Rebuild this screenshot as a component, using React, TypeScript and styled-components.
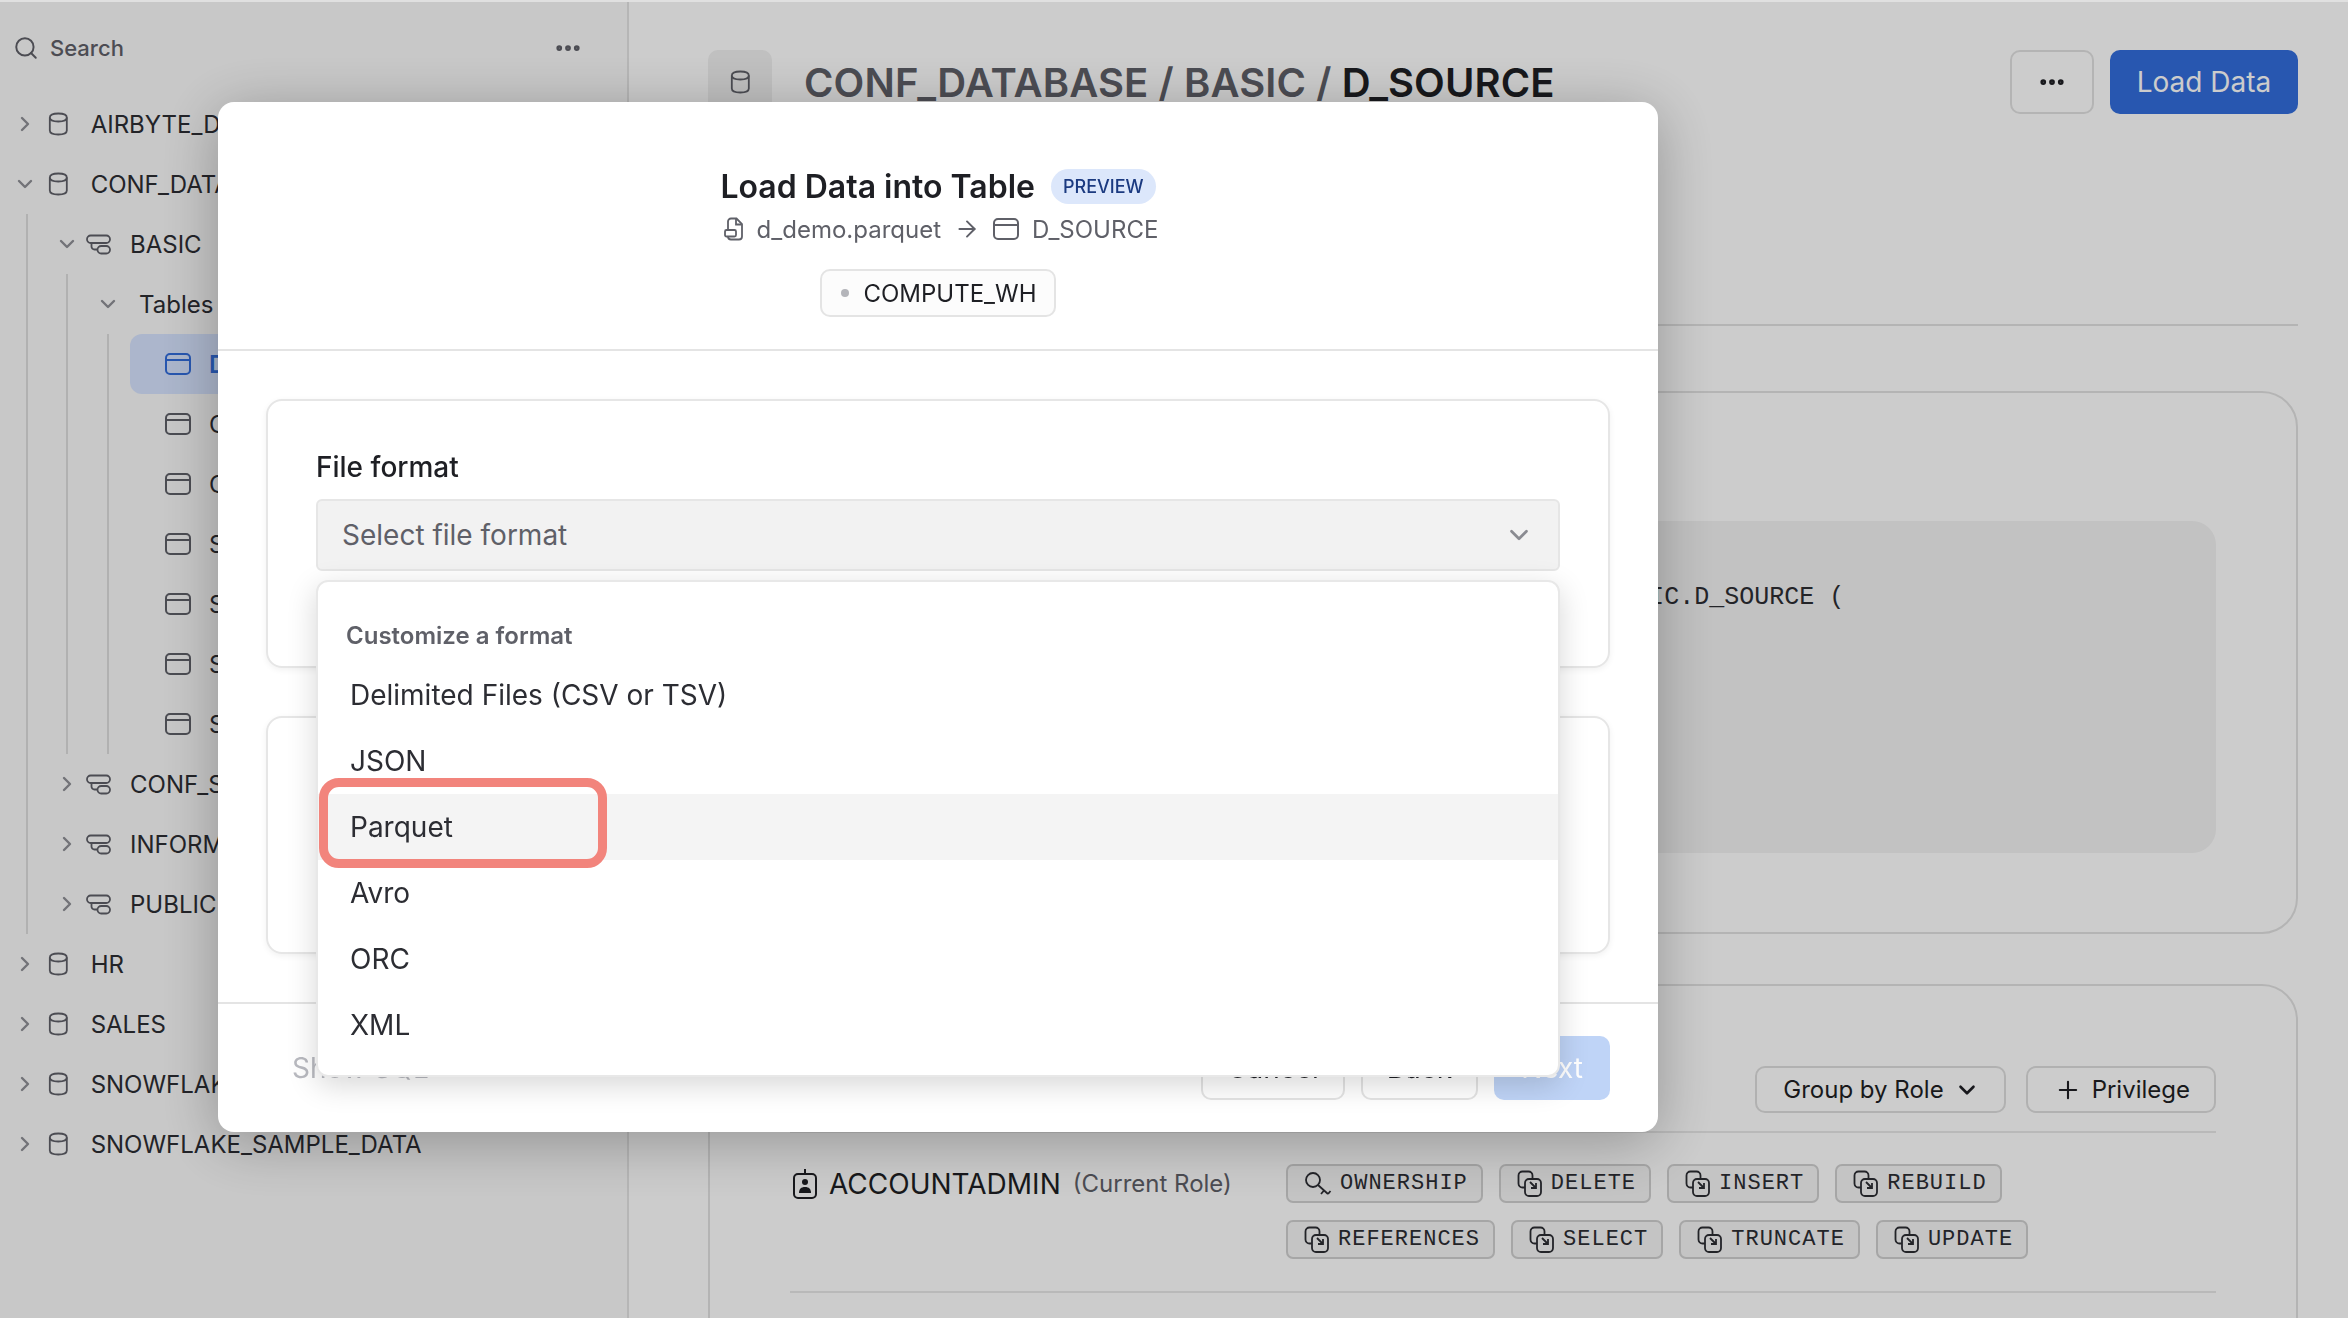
import React from 'react';
import styled, { createGlobalStyle } from 'styled-components';
import { ArrowRight, ChevronDown, ChevronRight, MoreHorizontal, Plus, Search } from 'lucide-react';

const GlobalStyle = createGlobalStyle`
  html, body {
    margin: 0;
    padding: 0;
    background: #fff;
    font-family: 'Inter', 'Liberation Sans', sans-serif;
    color: #1e1f24;
    overflow: hidden;
  }
  * { box-sizing: border-box; }
`;

const Page = styled.div`
  display: flex;
  width: 2348px;
  height: 1318px;
  overflow: hidden;
`;

const Sidebar = styled.aside`
  flex: 0 0 629px;
  background: #fafafa;
  border-right: 2px solid #e4e4e4;
  padding-top: 24px;
`;

const SearchRow = styled.div`
  display: flex;
  align-items: center;
  height: 48px;
  padding: 0 44px 0 13px;
  margin-bottom: 22px;
  color: #5f6068;
  font-size: 22px;
  font-weight: 500;
  gap: 11px;
`;

const SearchLabel = styled.span`
  flex: 1;
`;

const TreeGroup = styled.div<{ $left: number }>`
  margin-left: ${(p) => p.$left}px;
  border-left: 2px solid #dedede;
`;

const TreeRow = styled.div<{ $pad: number; $selected?: boolean }>`
  display: flex;
  align-items: center;
  height: 60px;
  padding-left: ${(p) => p.$pad}px;
  font-size: 24px;
  color: ${(p) => (p.$selected ? '#326ddc' : '#2c2d33')};
  font-weight: ${(p) => (p.$selected ? 600 : 400)};
  white-space: nowrap;
  background: ${(p) => (p.$selected ? '#d7e4ff' : 'transparent')};
  border-radius: ${(p) => (p.$selected ? '12px' : '0')};
`;

const Caret = styled.span<{ $after: number }>`
  display: flex;
  width: 24px;
  justify-content: center;
  margin-right: ${(p) => p.$after}px;
  color: #8f9096;
  flex: none;
`;

const TreeIcon = styled.span<{ $gap: number }>`
  display: flex;
  flex: none;
  margin: 0 ${(p) => p.$gap}px 0 0;
  color: #5f6068;
`;

const SelectedTable = styled.div`
  margin-left: 21px;
`;

const Main = styled.main`
  flex: 1;
  min-width: 0;
  background: #fff;
  padding: 50px 50px 0 79px;
`;

const Header = styled.header`
  display: flex;
  align-items: center;
  height: 64px;
`;

const TitleIcon = styled.div`
  display: flex;
  align-items: center;
  justify-content: center;
  width: 64px;
  height: 64px;
  border-radius: 10px;
  background: #f0f0f0;
  color: #5f6068;
  margin-right: 32px;
`;

const Title = styled.h1`
  flex: 1;
  margin: 0;
  font-size: 40px;
  font-weight: 600;
  color: #5f6068;
  letter-spacing: 0.1px;
`;

const TitleStrong = styled.span`
  color: #1e1f24;
`;

const IconButton = styled.button`
  display: flex;
  align-items: center;
  justify-content: center;
  width: 84px;
  height: 64px;
  border: 2px solid #e2e2e2;
  border-radius: 10px;
  background: #fff;
  color: #1e1f24;
  margin-right: 16px;
`;

const PrimaryButton = styled.button`
  width: 188px;
  height: 64px;
  border: none;
  border-radius: 10px;
  background: #326ddc;
  color: #fff;
  font-family: inherit;
  font-size: 28px;
`;

const Rule = styled.div`
  height: 2px;
  background: #e2e2e2;
  margin-top: 210px;
`;

const Card = styled.section`
  border: 2px solid #e2e2e2;
  border-radius: 36px;
`;

const DefinitionCard = styled(Card)`
  height: 543px;
  margin-top: 65px;
  padding: 128px 80px 0;
`;

const CodeBlock = styled.pre`
  height: 332px;
  margin: 0;
  padding: 62px 0 0 94px;
  border-radius: 24px;
  background: #f3f3f3;
  font-family: 'Liberation Mono', monospace;
  font-size: 25px;
  color: #2c2d33;
`;

const PrivilegesCard = styled(Card)`
  height: 500px;
  margin-top: 50px;
  padding: 80px 80px 0;
`;

const PrivilegeActions = styled.div`
  display: flex;
  justify-content: flex-end;
  gap: 20px;
  padding-bottom: 18px;
  border-bottom: 2px solid #e8e8e8;
`;

const OutlineButton = styled.button`
  display: flex;
  align-items: center;
  gap: 10px;
  height: 47px;
  padding: 0 24px 0 26px;
  border: 2px solid #dedede;
  border-radius: 10px;
  background: #fff;
  color: #1e1f24;
  font-family: inherit;
  font-size: 24px;
`;

const RoleRow = styled.div`
  display: flex;
  padding: 31px 0 32px 3px;
  border-bottom: 2px solid #e8e8e8;
`;

const RoleName = styled.div`
  display: flex;
  flex: 0 0 493px;
  align-items: center;
  height: 39px;
  gap: 12px;
  font-size: 28px;
`;

const RoleNote = styled.span`
  font-size: 24px;
  color: #5f6068;
`;

const ChipList = styled.div`
  display: flex;
  flex-wrap: wrap;
  gap: 17px 16px;
`;

const Chip = styled.span`
  display: flex;
  align-items: center;
  gap: 8px;
  height: 39px;
  padding: 0 13px 0 16px;
  border: 2px solid #d0d0d0;
  border-radius: 7px;
  background: #f5f5f5;
  font-family: 'Liberation Mono', monospace;
  font-size: 22px;
  letter-spacing: 1px;
  color: #2c2d33;
`;

const Backdrop = styled.div`
  position: fixed;
  inset: 2px 0 0 0;
  background: rgba(0, 0, 0, 0.2);
`;

const TopEdge = styled.div`
  position: fixed;
  inset: 0 0 auto 0;
  height: 2px;
  background: #e0e0e0;
`;

const Modal = styled.div`
  position: fixed;
  left: 218px;
  top: 102px;
  display: flex;
  flex-direction: column;
  width: 1440px;
  height: 1030px;
  border-radius: 16px;
  background: #fff;
  box-shadow: 0 10px 60px rgba(0, 0, 0, 0.28);
`;

const ModalHeader = styled.div`
  display: flex;
  flex-direction: column;
  align-items: center;
  height: 249px;
  padding-top: 62px;
  border-bottom: 2px solid #e4e4e4;
`;

const ModalTitleRow = styled.div`
  display: flex;
  align-items: center;
  gap: 16px;
  height: 44px;
`;

const ModalTitle = styled.h2`
  margin: 0;
  font-size: 32px;
  font-weight: 600;
  color: #1e1f24;
`;

const PreviewPill = styled.span`
  display: flex;
  align-items: center;
  height: 35px;
  padding: 0 12px;
  border-radius: 18px;
  background: #dce7fb;
  color: #1b3a80;
  font-size: 18px;
  font-weight: 500;
`;

const ModalSub = styled.div`
  display: flex;
  align-items: center;
  gap: 13px;
  height: 40px;
  margin: 1px 0 0 6px;
  font-size: 24px;
  color: #5f6068;
`;

const WarehousePill = styled.div`
  display: flex;
  align-items: center;
  gap: 14px;
  height: 48px;
  margin-top: 20px;
  padding: 0 17px 0 19px;
  border: 2px solid #e4e4e4;
  border-radius: 10px;
  background: #fcfcfc;
  font-size: 24px;
  color: #1e1f24;
`;

const StatusDot = styled.span`
  width: 8px;
  height: 8px;
  border-radius: 50%;
  background: #b4b5ba;
`;

const ModalBody = styled.div`
  flex: 1;
  display: flex;
  flex-direction: column;
  gap: 48px;
  padding: 48px 48px 0 48px;
  border-bottom: 2px solid #e4e4e4;
`;

const FormCard = styled.div<{ $height: number }>`
  height: ${(p) => p.$height}px;
  padding: 47px 48px 0;
  border: 2px solid #e6e6e6;
  border-radius: 16px;
  box-shadow: 0 2px 6px rgba(0, 0, 0, 0.06);
`;

const FieldLabel = styled.label`
  display: block;
  height: 38px;
  margin-bottom: 13px;
  font-size: 28px;
  font-weight: 500;
  line-height: 38px;
  color: #1e1f24;
`;

const SelectWrap = styled.div`
  position: relative;
`;

const SelectBox = styled.div`
  display: flex;
  align-items: center;
  justify-content: space-between;
  height: 72px;
  padding: 0 24px;
  border: 2px solid #e6e6e6;
  border-radius: 6px;
  background: #f2f2f2;
  color: #5f6068;
  font-size: 28px;
`;

const Dropdown = styled.div`
  position: absolute;
  z-index: 2;
  top: 81px;
  left: 0;
  width: 100%;
  height: 497px;
  padding: 34px 0 0;
  border: 2px solid #e8e8e8;
  border-radius: 12px;
  background: #fff;
  box-shadow: 0 8px 30px rgba(0, 0, 0, 0.16);
`;

const DropdownLabel = styled.div`
  height: 40px;
  padding-left: 28px;
  margin-bottom: 6px;
  font-size: 24px;
  font-weight: 600;
  line-height: 40px;
  color: #5f6068;
`;

const DropdownItem = styled.div<{ $active?: boolean }>`
  display: flex;
  align-items: center;
  height: 66px;
  padding-left: 32px;
  font-size: 28px;
  color: #2c2d33;
  background: ${(p) => (p.$active ? '#f4f4f4' : 'transparent')};
`;

const Highlight = styled.div`
  position: absolute;
  z-index: 3;
  left: 1px;
  top: 196px;
  width: 288px;
  height: 90px;
  border: 9px solid #f2847c;
  border-radius: 20px;
`;

const ModalFooter = styled.div`
  display: flex;
  align-items: center;
  gap: 16px;
  height: 128px;
  padding: 0 48px 0 74px;
`;

const ShowSql = styled.span`
  flex: 1;
  font-size: 28px;
  color: #b9bac0;
`;

const FooterButton = styled.button`
  height: 64px;
  padding: 0 24px;
  border: 2px solid #e4e4e4;
  border-radius: 10px;
  background: #fff;
  color: #1e1f24;
  font-family: inherit;
  font-size: 28px;
`;

const NextButton = styled(FooterButton)`
  padding: 0 27px;
  border: none;
  background: #bfd4f7;
  color: #fff;
`;

const DbIcon = ({ size = 24 }: { size?: number }) => (
  <svg width={size * 0.86} height={size} viewBox="0 0 20 24" fill="none" stroke="currentColor" strokeWidth="1.8">
    <path d="M1.500 5.500C1.500 3 4 1.500 10 1.500s8.500 1.500 8.500 4v13c0 2.500-2.500 4-8.500 4s-8.500-1.500-8.500-4z" />
    <path d="M1.500 5.500c0 2.500 2.500 4 8.500 4s8.500-1.500 8.500-4" />
  </svg>
);

const SchemaIcon = () => (
  <svg width="25" height="21" viewBox="0 0 25 21" fill="none" stroke="currentColor" strokeWidth="1.8">
    <rect x="1" y="1.500" width="23" height="7.500" rx="3.700" />
    <path d="M5.500 9v3.500a3 3 0 0 0 3 3h3" />
    <rect x="11.500" y="12" width="12.500" height="7.500" rx="3.700" />
  </svg>
);

const TableIcon = ({ color }: { color?: string }) => (
  <svg width="26" height="22" viewBox="0 0 26 22" fill="none" stroke={color ?? 'currentColor'} strokeWidth="2">
    <rect x="1" y="1" width="24" height="20" rx="4" />
    <path d="M1 7h24" />
  </svg>
);

const FileIcon = () => (
  <svg width="20" height="24" viewBox="0 0 20 24" fill="none" stroke="currentColor" strokeWidth="1.8">
    <path d="M4 13V4.500a3 3 0 0 1 3-3h5.500l5.500 5.500v12.500a3 3 0 0 1-3 3H7a3 3 0 0 1-3-3" />
    <path d="M12 2v5.500h5.500" />
    <rect x="1" y="13" width="11" height="6.500" rx="1.500" />
  </svg>
);

const KeyIcon = () => (
  <svg width="28" height="26" viewBox="0 0 28 26" fill="none" stroke="currentColor" strokeWidth="1.8">
    <circle cx="9" cy="9" r="7" />
    <path d="M14 14l10 9M20 19.500l-3 3.500M24 23l2.500-3" />
  </svg>
);

const GrantIcon = () => (
  <svg width="26" height="28" viewBox="0 0 26 28" fill="none" stroke="currentColor" strokeWidth="1.8">
    <rect x="1.500" y="1.500" width="14" height="16" rx="4" />
    <rect x="8" y="9" width="16" height="17" rx="4" fill="#f5f5f5" />
    <path d="M13 12l6 6M19 13v5h-5" />
  </svg>
);

const RoleIcon = () => (
  <svg width="24" height="30" viewBox="0 0 24 30" fill="none" stroke="currentColor" strokeWidth="2">
    <rect x="1" y="5" width="22" height="24" rx="4" />
    <path d="M12 0v5" />
    <circle cx="12" cy="13" r="3" fill="currentColor" stroke="none" />
    <path d="M6 24c0-4 2-6 6-6s6 2 6 6z" fill="currentColor" stroke="none" />
  </svg>
);

const Right = () => <ChevronRight size={24} strokeWidth={2.4} />;
const Down = () => <ChevronDown size={26} strokeWidth={2.4} />;

const tableRows = ['CUSTOMERS', 'ORDERS', 'SALES', 'STORES', 'SUPPLIERS', 'SHIPMENTS'];
const dbBelow = ['HR', 'SALES', 'SNOWFLAKE', 'SNOWFLAKE_SAMPLE_DATA'];
const schemasBelow = ['CONF_STAGING', 'INFORMATION_SCHEMA', 'PUBLIC'];
const formats = ['Delimited Files (CSV or TSV)', 'JSON', 'Parquet', 'Avro', 'ORC', 'XML'];
const chips = ['OWNERSHIP', 'DELETE', 'INSERT', 'REBUILD', 'REFERENCES', 'SELECT', 'TRUNCATE', 'UPDATE'];

const App: React.FC = () => (
  <>
    <GlobalStyle />
    <Page>
      <Sidebar>
        <SearchRow>
          <Search size={26} strokeWidth={1.8} />
          <SearchLabel>Search</SearchLabel>
          <MoreHorizontal size={30} strokeWidth={2.6} />
        </SearchRow>
        <TreeRow $pad={13}>
          <Caret $after={11}><Right /></Caret>
          <TreeIcon $gap={22}><DbIcon /></TreeIcon>
          AIRBYTE_DATABASE
        </TreeRow>
        <TreeRow $pad={13}>
          <Caret $after={11}><Down /></Caret>
          <TreeIcon $gap={22}><DbIcon /></TreeIcon>
          CONF_DATABASE
        </TreeRow>
        <TreeGroup $left={26}>
          <TreeRow $pad={27}>
            <Caret $after={7}><Down /></Caret>
            <TreeIcon $gap={19}><SchemaIcon /></TreeIcon>
            BASIC
          </TreeRow>
          <TreeGroup $left={38}>
            <TreeRow $pad={28}>
              <Caret $after={19}><Down /></Caret>
              Tables
            </TreeRow>
            <TreeGroup $left={39}>
              <SelectedTable>
                <TreeRow $pad={35} $selected>
                  <TreeIcon $gap={18}><TableIcon color="#326ddc" /></TreeIcon>
                  D_SOURCE
                </TreeRow>
                {tableRows.map((name) => (
                  <TreeRow key={name} $pad={35}>
                    <TreeIcon $gap={18}><TableIcon /></TreeIcon>
                    {name}
                  </TreeRow>
                ))}
              </SelectedTable>
            </TreeGroup>
          </TreeGroup>
          {schemasBelow.map((name) => (
            <TreeRow key={name} $pad={27}>
              <Caret $after={7}><Right /></Caret>
              <TreeIcon $gap={19}><SchemaIcon /></TreeIcon>
              {name}
            </TreeRow>
          ))}
        </TreeGroup>
        {dbBelow.map((name) => (
          <TreeRow key={name} $pad={13}>
            <Caret $after={11}><Right /></Caret>
            <TreeIcon $gap={22}><DbIcon /></TreeIcon>
            {name}
          </TreeRow>
        ))}
      </Sidebar>

      <Main>
        <Header>
          <TitleIcon><DbIcon /></TitleIcon>
          <Title>
            CONF_DATABASE / BASIC / <TitleStrong>D_SOURCE</TitleStrong>
          </Title>
          <IconButton><MoreHorizontal size={30} strokeWidth={2.6} /></IconButton>
          <PrimaryButton>Load Data</PrimaryButton>
        </Header>
        <Rule />
        <DefinitionCard>
          <CodeBlock>create or replace TRANSIENT TABLE CONF_DATABASE.BASIC.D_SOURCE (</CodeBlock>
        </DefinitionCard>
        <PrivilegesCard>
          <PrivilegeActions>
            <OutlineButton>Group by Role <ChevronDown size={26} strokeWidth={2.4} /></OutlineButton>
            <OutlineButton><Plus size={28} strokeWidth={1.8} /> Privilege</OutlineButton>
          </PrivilegeActions>
          <RoleRow>
            <RoleName>
              <RoleIcon />
              ACCOUNTADMIN <RoleNote>(Current Role)</RoleNote>
            </RoleName>
            <ChipList>
              {chips.map((chip) => (
                <Chip key={chip}>
                  {chip === 'OWNERSHIP' ? <KeyIcon /> : <GrantIcon />}
                  {chip}
                </Chip>
              ))}
            </ChipList>
          </RoleRow>
        </PrivilegesCard>
      </Main>
    </Page>

    <TopEdge />
    <Backdrop />
    <Modal>
      <ModalHeader>
        <ModalTitleRow>
          <ModalTitle>Load Data into Table</ModalTitle>
          <PreviewPill>PREVIEW</PreviewPill>
        </ModalTitleRow>
        <ModalSub>
          <FileIcon />
          d_demo.parquet
          <ArrowRight size={26} strokeWidth={1.8} />
          <TableIcon />
          D_SOURCE
        </ModalSub>
        <WarehousePill>
          <StatusDot />
          COMPUTE_WH
        </WarehousePill>
      </ModalHeader>
      <ModalBody>
        <FormCard $height={269}>
          <FieldLabel>File format</FieldLabel>
          <SelectWrap>
            <SelectBox>
              Select file format
              <ChevronDown size={30} color="#8a8b91" strokeWidth={2.2} />
            </SelectBox>
            <Dropdown>
              <DropdownLabel>Customize a format</DropdownLabel>
              {formats.map((format) => (
                <DropdownItem key={format} $active={format === 'Parquet'}>{format}</DropdownItem>
              ))}
              <Highlight />
            </Dropdown>
          </SelectWrap>
        </FormCard>
        <FormCard $height={238} />
      </ModalBody>
      <ModalFooter>
        <ShowSql>Show SQL</ShowSql>
        <FooterButton>Cancel</FooterButton>
        <FooterButton>Back</FooterButton>
        <NextButton>Next</NextButton>
      </ModalFooter>
    </Modal>
  </>
);

export default App;
